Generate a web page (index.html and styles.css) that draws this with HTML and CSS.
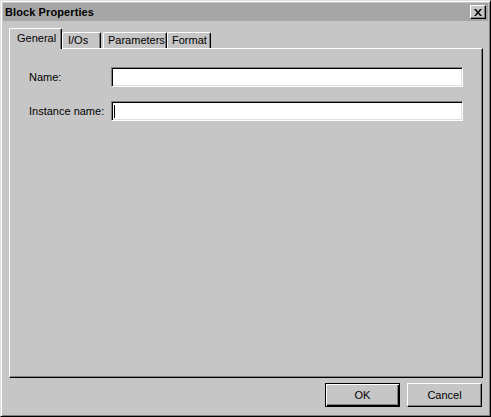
FILE: index.html
```html
<!DOCTYPE html>
<html lang="en">
<head>
    <meta charset="UTF-8">
    <title>Block Properties</title>
    <link rel="stylesheet" href="styles.css">
</head>
<body>
    <div class="window">
        <div class="titlebar">
            <span class="title">Block Properties</span>
            <button class="close" type="button">
                <svg width="8" height="7" viewBox="0 0 8 7"><path d="M0 0h2l2 2.5 2-2.5h2l-3 3.5 3 3.5h-2l-2-2.5-2 2.5h-2l3-3.5z" fill="#000"/></svg>
            </button>
        </div>
        <div class="tabs">
            <div class="tab active tab-general">General</div>
            <div class="tab tab-ios">I/Os</div>
            <div class="tab tab-params">Parameters</div>
            <div class="tab tab-format">Format</div>
        </div>
        <div class="panel">
            <div class="row">
                <label>Name:</label>
                <div class="field"></div>
            </div>
            <div class="row">
                <label>Instance name:</label>
                <div class="field"><span class="caret"></span></div>
            </div>
        </div>
        <div class="footer">
            <button class="btn default" type="button">OK</button>
            <button class="btn" type="button">Cancel</button>
        </div>
    </div>
</body>
</html>
```
FILE: styles.css
```css
* {
    box-sizing: border-box;
}
body {
    margin: 0;
    font-family: "Liberation Sans", Arial, sans-serif;
    font-size: 11px;
    color: #000;
    background: #c6c6c6;
}
.window {
    width: 491px;
    height: 417px;
    padding: 2px;
    background: #c6c6c6;
    border: 1px solid;
    border-color: #dfdfdf #000 #000 #dfdfdf;
    box-shadow: inset 1px 1px #fff, inset -1px -1px #808080;
}
.titlebar {
    height: 18px;
    background: #a6a6a6;
    display: flex;
    align-items: center;
    justify-content: space-between;
    padding: 0 2px 0 2px;
}
.title {
    font-weight: bold;
    font-size: 11px;
    letter-spacing: 0.1px;
}
.close {
    width: 16px;
    height: 14px;
    padding: 0;
    margin: 0;
    background: #c6c6c6;
    border: 1px solid;
    border-color: #fff #000 #000 #fff;
    box-shadow: inset -1px -1px #808080;
    display: flex;
    align-items: center;
    justify-content: center;
}
.tabs {
    display: flex;
    align-items: flex-end;
    height: 20px;
    margin-top: 7px;
    padding-left: 6px;
    position: relative;
    z-index: 1;
}
.tab {
    height: 16px;
    background: #c6c6c6;
    border-left: 1px solid #fff;
    border-top: 1px solid #fff;
    border-right: 1px solid #000;
    border-radius: 2px 2px 0 0;
    box-shadow: inset -1px 0 #808080;
    padding: 1px 0 0 5px;
    white-space: nowrap;
}
.tab.active {
    height: 21px;
    margin-bottom: -1px;
    padding: 3px 0 0 7px;
}
.tab-general {
    width: 53px;
}
.tab-ios {
    width: 39px;
    margin-right: 2px;
}
.tab-params {
    width: 64px;
    padding-left: 4px;
}
.tab-format {
    width: 44px;
    padding-left: 4px;
}
.panel {
    height: 330px;
    margin-left: 6px;
    width: 474px;
    border: 1px solid;
    border-color: #fff #000 #000 #fff;
    box-shadow: inset -1px -1px #808080;
    padding: 18px 0 0 19px;
    display: flex;
    flex-direction: column;
    gap: 14px;
}
.row {
    display: flex;
    align-items: center;
    height: 20px;
}
.row label {
    width: 82px;
}
.field {
    width: 352px;
    height: 20px;
    background: #fff;
    border: 1px solid;
    border-color: #808080 #fff #fff #808080;
    box-shadow: inset 1px 1px #000, inset -1px -1px #dfdfdf;
    position: relative;
}
.caret {
    position: absolute;
    left: 2px;
    top: 3px;
    width: 1px;
    height: 13px;
    background: #000;
}
.footer {
    display: flex;
    justify-content: flex-end;
    gap: 7px;
    margin-top: 5px;
    padding-right: 6px;
}
.btn {
    width: 75px;
    height: 24px;
    padding: 0;
    margin: 0;
    font-family: "Liberation Sans", Arial, sans-serif;
    font-size: 11px;
    color: #000;
    background: #c6c6c6;
    border: 1px solid;
    border-color: #fff #000 #000 #fff;
    box-shadow: inset -1px -1px #808080;
}
.btn.default {
    border: 1px solid #000;
    box-shadow: inset 1px 1px #fff, inset -1px -1px #000, inset -2px -2px #808080;
}
```
